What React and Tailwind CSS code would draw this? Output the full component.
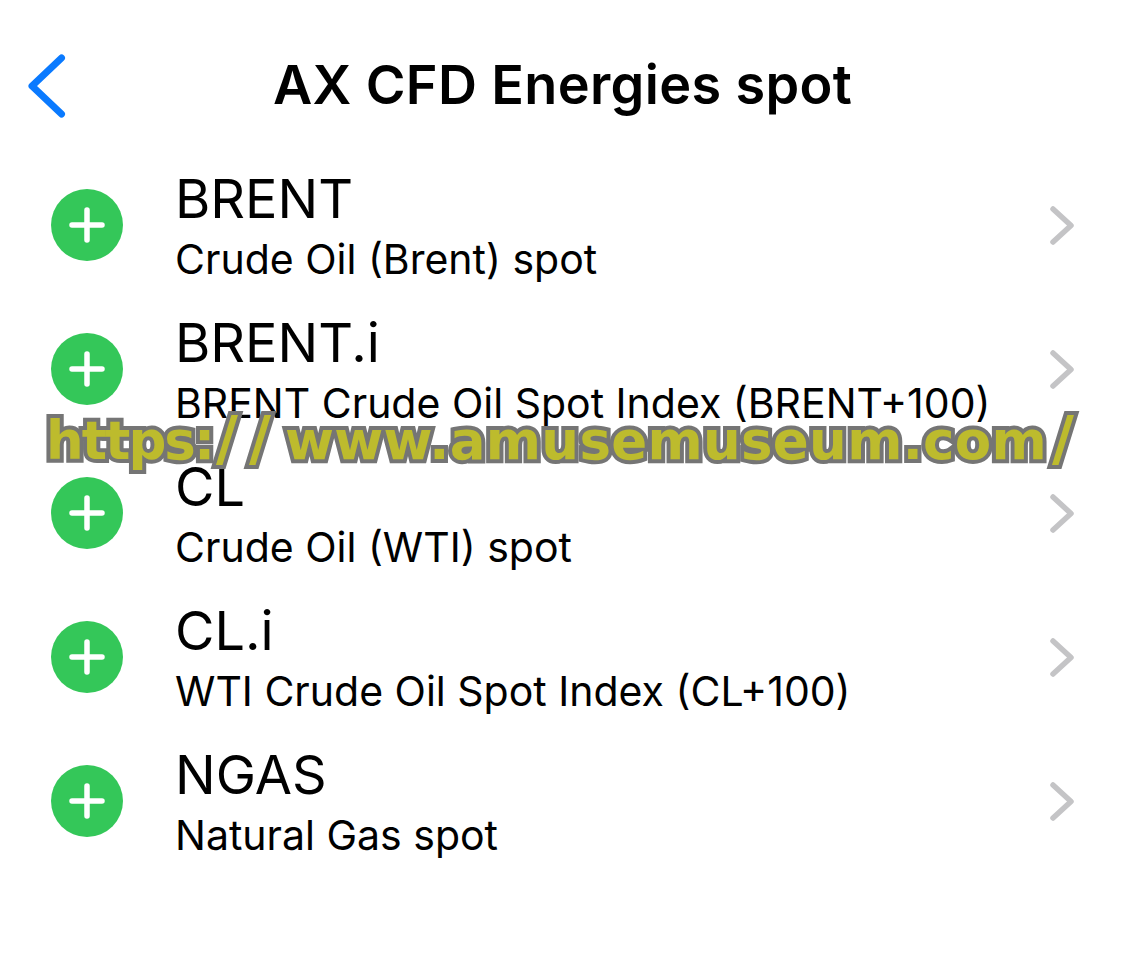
const rows = [
    { symbol: 'BRENT', name: 'Crude Oil (Brent) spot' },
    { symbol: 'BRENT.i', name: 'BRENT Crude Oil Spot Index (BRENT+100)' },
    { symbol: 'CL', name: 'Crude Oil (WTI) spot' },
    { symbol: 'CL.i', name: 'WTI Crude Oil Spot Index (CL+100)' },
    { symbol: 'NGAS', name: 'Natural Gas spot' },
];

const PlusCircle = () => (
    <svg width="72" height="72" viewBox="0 0 72 72" className="shrink-0">
        <circle cx="36" cy="36" r="36" fill="#34c759" />
        <path d="M36 21v30M21 36h30" stroke="#fff" strokeWidth="5.5" strokeLinecap="round" fill="none" />
    </svg>
);

const Row = ({ symbol, name }) => (
    <div className="flex h-[144px] items-center pl-[51px] pr-[51px]">
        <PlusCircle />
        <div className="ml-[52px] flex-1 min-w-0 pt-[6px]">
            <div className="text-[54px] leading-[54px] text-black">{symbol}</div>
            <div className="mt-[8px] text-[41px] leading-[50px] text-black whitespace-nowrap">{name}</div>
        </div>
        <svg width="24" height="39" viewBox="0 0 24 39" className="shrink-0">
            <path d="M3 3l18 16.5L3 36" stroke="#c4c4c6" strokeWidth="5.5" strokeLinecap="round" strokeLinejoin="round" fill="none" />
        </svg>
    </div>
);

export default function App() {
    return (
        <div className="relative h-[958px] w-[1125px] overflow-hidden bg-white font-['Inter',sans-serif]">
            {/* Nav bar */}
            <div className="relative flex h-[153px] items-start justify-center pt-[52px]">
                <svg width="38" height="64" viewBox="0 0 38 64" className="absolute left-[28px] top-[54px]">
                    <path d="M33.5 4L4 32l29.5 28" stroke="#0a7aff" strokeWidth="7" strokeLinecap="round" strokeLinejoin="round" fill="none" />
                </svg>
                <h1 className="text-[54px] leading-[66px] font-semibold tracking-[0.35px] text-black">AX CFD Energies spot</h1>
            </div>

            {rows.map((row) => (
                <Row key={row.symbol} symbol={row.symbol} name={row.name} />
            ))}

            {/* Watermark */}
            <div className="absolute left-[46px] top-[402px] whitespace-nowrap font-['DejaVu_Sans',sans-serif] text-[53px] leading-[72px] font-bold text-[#bdbb2d] [-webkit-text-stroke:8px_#757575] [paint-order:stroke_fill]">
                <span className="tracking-[-2px]">https:</span>
                <span className="ml-[3px] text-[60px] tracking-[11px]">//</span>
                <span className="ml-[3px] tracking-[0.3px]">www.amusemuseum.com</span>
                <span className="ml-[5px] text-[60px]">/</span>
            </div>
        </div>
    );
}
